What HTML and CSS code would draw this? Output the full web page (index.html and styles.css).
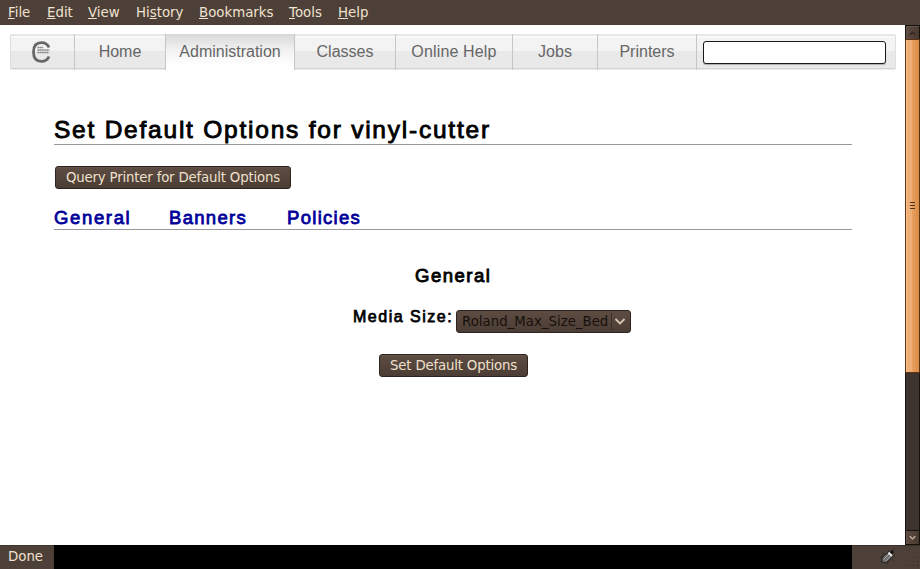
FILE: index.html
```html
<!DOCTYPE html>
<html lang="en">
<head>
<meta charset="utf-8">
<title>Set Default Options for vinyl-cutter</title>
<link rel="stylesheet" href="styles.css">
</head>
<body>
<div class="menubar"><span class="m-file"><u>F</u>ile</span><span class="m-edit"><u>E</u>dit</span><span class="m-view"><u>V</u>iew</span><span class="m-history">Hi<u>s</u>tory</span><span class="m-bookmarks"><u>B</u>ookmarks</span><span class="m-tools"><u>T</u>ools</span><span class="m-help"><u>H</u>elp</span></div>
<div class="viewport">
  <main class="page">
    <nav class="nav">
      <a class="tab logo"><svg width="22" height="24" viewBox="0 0 22 24"><path d="M19 7.500C17.500 4 15 2.600 11.500 2.600C6 2.600 3.500 6.500 3.500 12C3.500 17.500 6 21.400 11.500 21.400C15 21.400 17.500 20 19 16.500" fill="none" stroke="#666" stroke-width="2.800"/><path d="M7.500 7.500h6M7.500 10h12M7.500 12.500h11" stroke="#808080" stroke-width="1.400" stroke-dasharray="1.500 .4"/></svg></a>
      <a class="tab home">Home</a>
      <a class="tab admin">Administration</a>
      <a class="tab classes">Classes</a>
      <a class="tab online">Online Help</a>
      <a class="tab jobs">Jobs</a>
      <a class="tab printers">Printers</a>
      <div class="search"><input type="text" aria-label="Search"></div>
    </nav>
    <section class="content">
      <h1><span>Set Default Options for vinyl-cutter</span></h1>
      <button class="btn query">Query Printer for Default Options</button>
      <div class="groups"><a class="g1">General</a><a class="g2">Banners</a><a class="g3">Policies</a></div>
      <h3>General</h3>
      <div class="field"><label>Media Size:</label><div class="select"><span>Roland_Max_Size_Bed</span><svg width="19" height="21" viewBox="0 0 19 21"><path d="M.5 2v17" stroke="#3a2e28"/><path d="M4.500 8l4.500 4.500 4.500-4.500" fill="none" stroke="#d5c6b5" stroke-width="1.800"/></svg></div></div>
      <button class="btn set">Set Default Options</button>
    </section>
  </main>
  <div class="scrollbar">
    <div class="arrow"><svg width="13" height="14" viewBox="0 0 13 14"><path d="M3 8l3-3 3 3" fill="none" stroke="#30251f" stroke-width="1.500"/></svg></div>
    <div class="thumb"><i></i><i></i><i></i></div>
    <div class="track"></div>
    <div class="arrow down"><svg width="13" height="13" viewBox="0 0 13 13"><path d="M3 5l3 3 3-3" fill="none" stroke="#c9b9a8" stroke-width="1.500"/></svg></div>
  </div>
</div>
<footer class="status"><div class="done">Done</div><div class="gap"></div><div class="tray"><svg width="68" height="23" viewBox="0 0 68 23"><g stroke="#2c2420" stroke-width=".8" fill="none"><path d="M30 7l3 2M28 11h3M29 16l3-1M35 17l1 2M41 10l2 1M40 13l2 2M36 4l1 2M41 4l2-1"/></g><ellipse cx="35" cy="11.500" rx="6.500" ry="3.600" transform="rotate(-45 35 11.500)" fill="#666" stroke="#2b2725"/><path d="M31.500 13.500l6-6M33.500 15l6-6" stroke="#bbb" stroke-width=".9"/><path d="M36.500 6.500l3.500 3.500" stroke="#eee" stroke-width="2"/><circle cx="40" cy="6" r="1.700" fill="#111"/><path d="M65 11.500h1M61 15.500h1M65 15.500h1M57 19.500h1M61 19.500h1M65 19.500h1" stroke="#2c221d" stroke-width="1"/></svg></div></footer>
</body>
</html>
```

FILE: styles.css
```css
* { box-sizing: border-box; }
body { margin: 0; width: 920px; height: 569px; overflow: hidden; background: #fff; display: flex; flex-direction: column; font-family: "DejaVu Sans", sans-serif; font-size: 13.33px; }
.menubar { height: 25px; flex: none; background: #4d4038; color: #f0e2cf; display: flex; padding-left: 8px; line-height: 25px; }
.menubar span { white-space: nowrap; }
.menubar u { text-decoration-thickness: 1px; text-underline-offset: 1px; }
.m-file { width: 39px; }
.m-edit { width: 41px; }
.m-view { width: 48px; }
.m-history { width: 63px; }
.m-bookmarks { width: 90px; }
.m-tools { width: 49px; }
.viewport { height: 520px; flex: none; display: flex; }
.page { width: 905px; padding: 9px 9px 0 10px; }
.nav { width: 886px; height: 36px; display: flex; border-radius: 3px; background: linear-gradient(#e9e9e9 0 1px, #e4e4e4 1px 2px, #fbfbfb 2px 3px, #f3f3f3 4px 17px, #e9e9e9 17px 34px, #d3d3d3 34px 35px, #ececec 35px); }
.tab { display: flex; justify-content: center; align-items: center; padding-bottom: 1px; border-right: 1px solid #c6c6c6; font: 16px "Liberation Sans", Arial, sans-serif; color: #666; white-space: nowrap; }
.logo { width: 65px; padding: 0 3px 1px 0; border-left: 1px solid #ddd; border-radius: 3px 0 0 3px; }
.home { width: 91px; }
.admin { width: 129px; background: linear-gradient(#d8d8d8, #f2f2f2 45%, #fff 90%); }
.classes { width: 101px; }
.online { width: 117px; letter-spacing: .15px; }
.jobs { width: 85px; }
.printers { width: 99px; }
.search { padding: 7px 0 0 6px; flex: 1; border-right: 1px solid #e0e0e0; border-radius: 0 3px 3px 0; }
.search input { display: block; width: 183px; height: 23px; margin: 0; background: #fff; border: 1px solid #1a1a1a; border-radius: 3px; box-shadow: 0 1px 1px #aaa; outline: 0; }
.content { padding: 44px 34px 0 44px; display: flex; flex-direction: column; align-items: flex-start; font-family: "Liberation Sans", Arial, sans-serif; }
h1, h3 { margin: 0; font-weight: 400; -webkit-text-stroke: .9px currentColor; white-space: nowrap; }
h1 { width: 798px; height: 31px; border-bottom: 1px solid #999; font-size: 24.5px; line-height: 31px; letter-spacing: 1.77px; }
.btn { height: 23px; margin: 0; padding: 0; border: 1px solid #2d2420; border-radius: 3px; background: linear-gradient(#5d4c42, #4b3d35); box-shadow: inset 0 1px #655349; color: #eee0cd; font: 13.33px "DejaVu Sans", sans-serif; letter-spacing: -.19px; line-height: 21px; white-space: nowrap; }
.query { width: 236px; margin: 21px 0 0 1px; }
.groups { width: 798px; height: 26px; margin-top: 15px; border-bottom: 1px solid #999; display: flex; font-size: 18.5px; line-height: 27px; letter-spacing: 1.3px; color: #009; -webkit-text-stroke: .8px currentColor; }
.g1 { width: 115px; letter-spacing: 1.65px; }
.g2 { width: 118px; }
h3 { font-size: 18.5px; line-height: 24px; letter-spacing: 1.5px; margin: 34px 0 0 361px; }
.field { display: flex; margin: 22px 0 0 299px; }
.field label { width: 103px; font-size: 16px; line-height: 14px; letter-spacing: 1.5px; -webkit-text-stroke: .75px currentColor; white-space: nowrap; }
.select { width: 175px; height: 23px; display: flex; justify-content: space-between; border: 1px solid #2d2420; border-radius: 3px; background: linear-gradient(#5d4c42, #4b3d35); color: #17100c; font: 13.33px/21px "DejaVu Sans", sans-serif; padding-left: 5px; }
.set { width: 149px; margin: 21px 0 0 325px; }
.scrollbar { width: 15px; display: flex; flex-direction: column; background: #3d342f; border: 1px solid #17110e; }
.arrow { height: 13px; background: linear-gradient(90deg, #5d4b41, #48392f); border: 1px solid #65544a; border-width: 1px 0 0 1px; flex: none; display: flex; }
.thumb { height: 334px; margin: 0 -1px; padding-bottom: 1px; border: 1px solid #5d3210; background: linear-gradient(90deg, #f6c18f 0 1px, #eeae75 1px 6px, #e7a05e 6px, #d98c48); display: flex; flex-direction: column; align-items: center; justify-content: center; gap: 2px; flex: none; }
.thumb i { width: 5px; height: 1px; background: #503018; }
.track { flex: 1; }
.down { height: 14px; border-top: 1px solid #17110e; }
.status { height: 24px; flex: none; display: flex; background: #4d4038; color: #f0e2cf; }
.done { width: 54px; padding-left: 8px; line-height: 22px; border-top: 1px solid #41352e; }
.gap { width: 798px; background: #000; }
.tray { width: 68px; border-top: 1px solid #3b302a; }
.tray svg, .arrow svg { display: block; }
```
